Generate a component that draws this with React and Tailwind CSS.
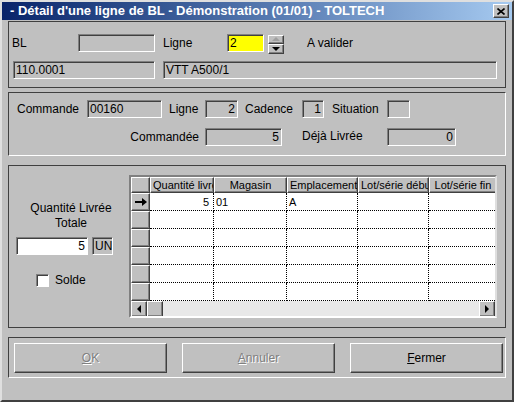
import React from 'react'

const SUNKEN = 'border border-t-[#808080] border-l-[#808080] border-b-white border-r-white shadow-[inset_1px_1px_0_#404040]'
const RAISED = 'border border-t-white border-l-white border-b-[#404040] border-r-[#404040] shadow-[inset_-1px_-1px_0_#808080]'
const COLS = [
  { label: 'Quantité livrée', w: 'w-[64px]', align: 'text-right pr-[4px]' },
  { label: 'Magasin', w: 'w-[73px]', align: 'text-left pl-[2px]' },
  { label: 'Emplacement', w: 'w-[71px]', align: 'text-left pl-[2px]' },
  { label: 'Lot/série début', w: 'w-[71px]', align: 'text-left pl-[2px]' },
  { label: 'Lot/série fin', w: 'w-[68px]', align: 'text-left pl-[2px]' },
]
const ROWS = [['5', '01', 'A', '', ''], ['', '', '', '', ''], ['', '', '', '', ''], ['', '', '', '', ''], ['', '', '', '', ''], ['', '', '', '', '']]

function Field({ className = '', children }) {
  return (
    <div className={`h-[18px] ${SUNKEN} flex items-center px-[2px] text-[12px] leading-none overflow-hidden whitespace-nowrap ${className}`}>
      {children}
    </div>
  )
}

function Button({ label, disabled }) {
  return (
    <div className={`w-[153px] h-[30px] ${RAISED} flex items-center justify-center text-[12px]`}>
      <span className={disabled ? 'text-[#808080] [text-shadow:1px_1px_0_#fff]' : 'text-black'}>
        <span className="underline">{label[0]}</span>{label.slice(1)}
      </span>
    </div>
  )
}

function Arrow({ dir, gray }) {
  const pts = dir === 'left' ? '5,0 1,4 5,8' : dir === 'right' ? '1,0 5,4 1,8' : dir === 'up' ? '0,5 4,1 8,5' : '0,1 8,1 4,5'
  return (
    <svg width={dir === 'left' || dir === 'right' ? 6 : 9} height={dir === 'left' || dir === 'right' ? 9 : 6} viewBox={dir === 'left' || dir === 'right' ? '0 0 6 9' : '0 0 9 6'}>
      <polygon points={pts} fill={gray ? '#a0a0a0' : '#000'} />
    </svg>
  )
}

function Grid() {
  return (
    <div className="w-[368px] h-[143px] border-2 border-t-[#808080] border-l-[#808080] border-b-white border-r-[#dfdfdf] shadow-[inset_1px_1px_0_#404040] bg-[#c0c0c0] flex flex-col overflow-hidden text-[11px] leading-none">
      <div className="flex h-[16px] shrink-0">
        <div className={`w-[19px] shrink-0 ${RAISED}`} />
        {COLS.map((c, i) => (
          <div key={i} className={`${c.w} shrink-0 ${RAISED} text-center overflow-hidden whitespace-nowrap pt-[2px] px-[2px]`}>{c.label}</div>
        ))}
      </div>
      {ROWS.map((r, ri) => (
        <div key={ri} className="flex h-[18px] shrink-0">
          <div className={`w-[19px] shrink-0 ${RAISED} flex items-center justify-center`}>
            {ri === 0 && (
              <svg width="12" height="8" viewBox="0 0 12 8">
                <path d="M0 3.5h8M0 4.5h8" stroke="#000" strokeWidth="1" />
                <polygon points="7,0 12,4 7,8" fill="#000" />
              </svg>
            )}
          </div>
          {COLS.map((c, ci) => (
            <div key={ci} className={`${c.w} shrink-0 bg-white border-r border-b border-dotted border-black ${c.align} pt-[4px] overflow-hidden whitespace-nowrap`}>{r[ci]}</div>
          ))}
        </div>
      ))}
      <div className="flex h-[16px] shrink-0 bg-[#e8e8e8]">
        <div className={`w-[16px] shrink-0 bg-[#c0c0c0] ${RAISED} flex items-center justify-center`}><Arrow dir="left" /></div>
        <div className={`w-[16px] shrink-0 bg-[#c0c0c0] ${RAISED}`} />
        <div className="flex-1" />
        <div className={`w-[16px] shrink-0 bg-[#c0c0c0] ${RAISED} flex items-center justify-center`}><Arrow dir="right" /></div>
      </div>
    </div>
  )
}

export default function App() {
  return (
    <div className="w-[514px] h-[402px] bg-[#c0c0c0] border-2 border-t-[#dfdfdf] border-l-[#dfdfdf] border-b-[#404040] border-r-[#404040] flex flex-col font-['Liberation_Sans',Arial,sans-serif] text-black overflow-hidden">
      {/* title bar */}
      <div className="h-[18px] shrink-0 bg-linear-to-r from-[#0a246a] to-[#a6caf0] flex items-center pl-[8px] pr-[3px]">
        <span className="text-white font-bold text-[13px] whitespace-nowrap">- Détail d'une ligne de BL - Démonstration (01/01) - TOLTECH</span>
        <div className={`ml-auto w-[16px] h-[14px] bg-[#c0c0c0] ${RAISED} flex items-center justify-center`}>
          <svg width="8" height="7" viewBox="0 0 8 7">
            <path d="M0.5 0.5L7.5 6.5M7.5 0.5L0.5 6.5" stroke="#000" strokeWidth="1.6" />
          </svg>
        </div>
      </div>

      <div className="flex flex-col px-[6px] pt-[1px]">
        {/* panel 1 */}
        <div className="w-[498px] h-[67px] border border-[#404040] flex flex-col pt-[12px]">
          <div className="flex items-center h-[18px] text-[12px]">
            <div className="w-[69px] pl-[3px]">BL</div>
            <Field className="w-[77px]" />
            <div className="w-[72px] pl-[8px]">Ligne</div>
            <Field className="w-[37px] bg-[#ffff00]">2</Field>
            <div className="ml-[4px] w-[16px] h-[19px] flex flex-col mt-[2px]">
              <div className={`h-[9px] ${RAISED} flex items-center justify-center`}><Arrow dir="up" gray /></div>
              <div className={`h-[10px] ${RAISED} flex items-center justify-center`}><Arrow dir="down" /></div>
            </div>
            <div className="ml-[23px]">A valider</div>
          </div>
          <div className="flex items-center h-[18px] mt-[9px]">
            <Field className="ml-[4px] w-[142px]">110.0001</Field>
            <Field className="ml-[8px] w-[334px]">VTT A500/1</Field>
          </div>
        </div>

        {/* panel 2 */}
        <div className="mt-[4px] w-[498px] h-[64px] border border-t-[#404040] border-l-[#404040] border-b-white border-r-white flex flex-col pt-[7px] text-[12px]">
          <div className="flex items-center h-[18px]">
            <div className="w-[78px] pl-[8px]">Commande</div>
            <Field className="w-[75px]">00160</Field>
            <div className="w-[43px] pl-[7px]">Ligne</div>
            <Field className="w-[33px] justify-end">2</Field>
            <div className="w-[64px] pl-[7px]">Cadence</div>
            <Field className="w-[22px] justify-end">1</Field>
            <div className="w-[63px] pl-[8px]">Situation</div>
            <Field className="w-[23px]" />
          </div>
          <div className="flex items-center h-[18px] mt-[10px]">
            <div className="w-[196px] text-right pr-[6px]">Commandée</div>
            <Field className="w-[77px] justify-end">5</Field>
            <div className="w-[105px] pl-[20px] -mt-[2px]">Déjà Livrée</div>
            <Field className="w-[69px] justify-end">0</Field>
          </div>
        </div>

        {/* panel 3 */}
        <div className="mt-[9px] w-[498px] h-[163px] border border-[#404040] flex">
          <div className="w-[120px] flex flex-col pt-[35px] text-[12px]">
            <div className="text-center leading-[15px] pl-[4px]">Quantité Livrée<br />Totale</div>
            <div className="flex items-center mt-[6px] ml-[7px]">
              <Field className="w-[72px] bg-white justify-end">5</Field>
              <Field className="ml-[4px] w-[21px]">UN</Field>
            </div>
            <div className="flex items-center mt-[16px] ml-[27px]">
              <div className={`w-[13px] h-[13px] bg-white ${SUNKEN}`} />
              <span className="ml-[6px]">Solde</span>
            </div>
          </div>
          <div className="pt-[9px]">
            <Grid />
          </div>
        </div>

        {/* panel 4 */}
        <div className="mt-[9px] w-[498px] h-[41px] border border-t-[#404040] border-l-[#404040] border-b-white border-r-white flex items-start pt-[5px] pl-[5px] gap-[15px]">
          <Button label="OK" disabled />
          <Button label="Annuler" disabled />
          <Button label="Fermer" />
        </div>
      </div>
    </div>
  )
}
